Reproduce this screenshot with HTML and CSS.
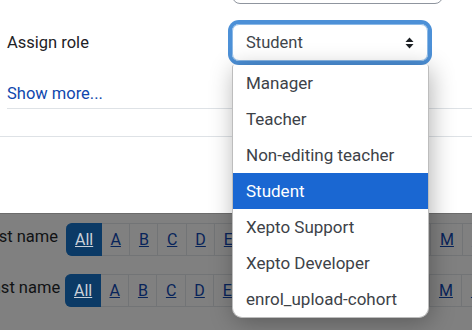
FILE: index.html
```html
<!DOCTYPE html>
<html lang="en">
<head>
    <meta charset="UTF-8">
    <title>Enrol users</title>
    <link rel="stylesheet" href="styles.css">
</head>
<body>
    <div class="dialog">
        <div class="prev-input"></div>

        <div class="form-row">
            <label class="form-label">Assign role</label>
            <div class="select">
                <span>Student</span>
                <svg class="select-arrow" width="9" height="12" viewBox="0 0 9 12">
                    <path d="M4.5 0.5 L8.5 5 L0.5 5 Z" fill="#1d2125"/>
                    <path d="M4.5 11.5 L8.5 7 L0.5 7 Z" fill="#1d2125"/>
                </svg>
            </div>
        </div>

        <a class="show-more" href="#">Show more...</a>
        <div class="rule rule-inner"></div>
        <div class="rule rule-full"></div>

        <!-- open list of the role select -->
        <ul class="dropdown">
            <li>Manager</li>
            <li>Teacher</li>
            <li>Non-editing teacher</li>
            <li class="selected">Student</li>
            <li>Xepto Support</li>
            <li>Xepto Developer</li>
            <li>enrol_upload-cohort</li>
        </ul>
    </div>

    <div class="backdrop">
        <div class="initials-row">
            <span class="initials-label first">First name</span>
            <div class="initials-bar">
                <a class="active" href="#">All</a>
                <a href="#">A</a><a href="#">B</a><a href="#">C</a><a href="#">D</a><a href="#">E</a><a href="#">F</a><a href="#">G</a><a href="#">H</a><a href="#">I</a><a href="#">J</a><a href="#">K</a><a href="#">L</a><a href="#">M</a><a href="#">N</a>
            </div>
        </div>
        <div class="initials-row">
            <span class="initials-label last">Last name</span>
            <div class="initials-bar">
                <a class="active" href="#">All</a>
                <a href="#">A</a><a href="#">B</a><a href="#">C</a><a href="#">D</a><a href="#">E</a><a href="#">F</a><a href="#">G</a><a href="#">H</a><a href="#">I</a><a href="#">J</a><a href="#">K</a><a href="#">L</a><a href="#">M</a><a href="#">N</a>
            </div>
        </div>
    </div>
</body>
</html>
```

FILE: styles.css
```css
body {
    margin: 0;
    font-family: Roboto, "Liberation Sans", sans-serif;
    font-size: 16.5px;
    color: #1d2125;
    background: #fff;
    overflow: hidden;
}

/* White dialog part */
.dialog {
    position: relative;
    display: flow-root;
    height: 213px;
    background: #fff;
}

.prev-input {
    margin-left: 232px;
    margin-top: -18px;
    width: 209px;
    height: 20px;
    border: 1px solid #8f959e;
    border-radius: 8px;
}

.form-row {
    display: flex;
    align-items: center;
    margin-top: 20px;
    padding-left: 7px;
}

.form-label {
    width: 225px;
}

.select {
    box-sizing: border-box;
    width: 196px;
    height: 37px;
    display: flex;
    align-items: center;
    justify-content: space-between;
    padding: 0 13px 0 13px;
    border: 1px solid #8cb9e6;
    border-radius: 7px;
    box-shadow: 0 0 0 4px #4c90d7;
    color: #40454b;
}

.show-more {
    display: block;
    margin: 23px 0 0 7px;
    line-height: 20px;
    color: #0f47ad;
    text-decoration: none;
    width: max-content;
}

.rule {
    border-top: 1px solid #dee2e6;
}
.rule-inner {
    margin: 4px 0 0 7px;
}
.rule-full {
    margin-top: 27px;
}

/* Dropdown list */
.dropdown {
    position: absolute;
    left: 232px;
    top: 65px;
    width: 195px;
    margin: 0;
    padding: 0;
    list-style: none;
    background: #fff;
    border: 1px solid #bdbdbd;
    border-top: none;
    border-radius: 2px 2px 10px 10px;
    box-shadow: 2px 4px 24px rgba(0, 0, 0, 0.3);
    overflow: hidden;
    z-index: 10;
    font-size: 17px;
}
.dropdown li {
    height: 36px;
    line-height: 36px;
    padding-left: 13px;
    color: #3d4248;
}
.dropdown li.selected {
    background: #1a67d2;
    color: #fff;
}

/* Dimmed page under the dialog */
.backdrop {
    height: 117px;
    background: #808080;
    border-top: 1px solid #6c6c6c;
    overflow: hidden;
    font-size: 16px;
}

.initials-row {
    display: flex;
    align-items: flex-start;
    margin-top: 9px;
    white-space: nowrap;
}
.initials-row + .initials-row {
    margin-top: 18px;
}

.initials-label {
    flex: none;
    color: #101214;
    line-height: 28px;
    font-size: 16.5px;
}
.initials-label.first {
    margin-left: -20px;
    width: 86px;
}
.initials-label.last {
    margin-left: -17px;
    width: 82px;
}

.initials-bar {
    display: flex;
}
.initials-bar a {
    display: block;
    height: 31px;
    line-height: 31px;
    padding: 0 8.5px;
    border: 1px solid #727476;
    border-left: none;
    color: #08245a;
    text-decoration: underline;
}
.initials-bar a.active {
    width: 17px;
    padding: 0 9px;
    background: #0b3a66;
    border-color: #0b3a66;
    border-radius: 6px 0 0 6px;
    color: #c9d0d8;
}
```
